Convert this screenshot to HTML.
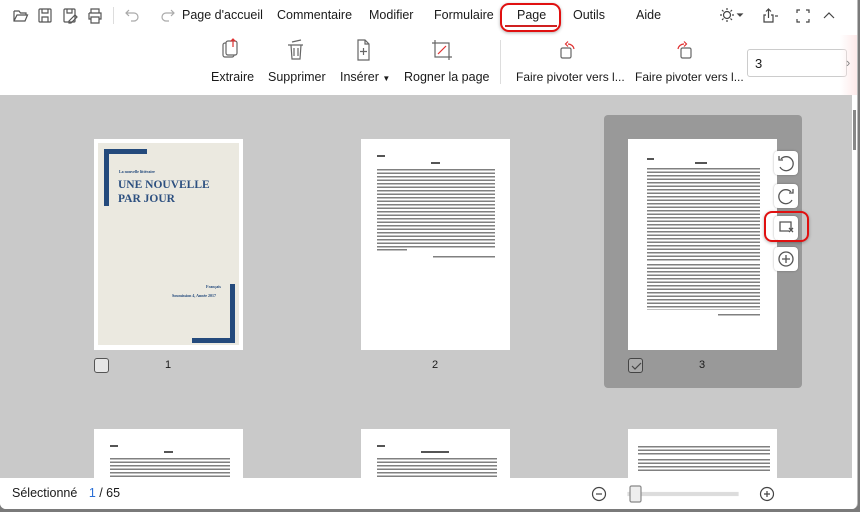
<!DOCTYPE html>
<html><head><meta charset="utf-8"><style>
*{margin:0;padding:0;box-sizing:border-box}
html,body{width:860px;height:512px;overflow:hidden}
body{background:#7a7a7a;font-family:"Liberation Sans",sans-serif;font-size:12.5px;color:#1a1a1a;position:relative}
.win{position:absolute;left:0;top:0;width:858px;height:509px;background:#fff;border-radius:0 0 6px 6px;overflow:hidden;border-right:1px solid #bbb}
.abs{position:absolute}
.menu span{position:absolute;top:8px;font-size:12.5px}
.tb{position:absolute;top:70px;font-size:12.5px;white-space:nowrap}
.gray{position:absolute;left:0;top:95px;width:852px;height:383px;background:#c9c9c9;overflow:hidden}
.pg{position:absolute;background:#fff;width:149px;height:211px;overflow:hidden}
.lines{position:absolute;background:repeating-linear-gradient(#555 0 1.3px,transparent 1.3px 3.5px);opacity:.75}
.cb{position:absolute;width:15px;height:15px;border:1px solid #555;border-radius:3px;background:#e6e6e6}
.num{position:absolute;font-size:11px}
.side{position:absolute;width:24px;height:24px;background:#fff;border-radius:4px;box-shadow:0 0 2px rgba(0,0,0,.3)}
.bottom{position:absolute;left:0;top:478px;width:858px;height:31px;background:#fff}
</style></head><body>
<div class="win">
<svg class="abs" style="left:12px;top:7px" width="95" height="18" fill="none" stroke="#555" stroke-width="1.2">
<path d="M2 4h5l1.5 2H14v2M2 4v10h11l2.5-6H5L2 14"/>
<rect x="27" y="2" width="12" height="13" rx="1"/><path d="M30 2v4h6V2M30 15v-5h6v5"/>
<rect x="52" y="2" width="11" height="13" rx="1"/><path d="M55 2v4h5V2M57 14l6-6 2 2-6 6h-2z"/>
<path d="M79 6V2h8v4M77 6h12v6h-2M79 12h-2V6M79 10h8v6h-8z"/>
</svg>
<div class="abs" style="left:113px;top:7px;width:1px;height:17px;background:#ddd"></div>
<svg class="abs" style="left:125px;top:6px" width="50" height="18" fill="none" stroke="#aaa" stroke-width="1.2">
<path d="M4 4L1 7l3 3M1 7h8a4 4 0 010 8H6"/><path d="M46 4l3 3-3 3M49 7h-8a4 4 0 000 8h3"/>
</svg>
<div class="menu">
<span style="left:182px">Page d'accueil</span>
<span style="left:277px">Commentaire</span>
<span style="left:369px">Modifier</span>
<span style="left:434px">Formulaire</span>
<span style="left:517px">Page</span>
<span style="left:573px">Outils</span>
<span style="left:636px">Aide</span>
</div>
<div class="abs" style="left:500px;top:3px;width:61px;height:29px;border:2.5px solid #e01010;border-radius:9px;box-shadow:0 1px 3px rgba(0,0,0,.3)"></div>
<div class="abs" style="left:505px;top:25px;width:52px;height:1.5px;background:#d02020"></div>
<svg class="abs" style="left:718px;top:5px" width="130" height="20" fill="none" stroke="#444" stroke-width="1.2">
<circle cx="9" cy="10" r="3.5"/><path d="M9 3v2M9 15v2M2 10h2M14 10h2M4 5l1.5 1.5M12.5 13.5L14 15M4 15l1.5-1.5M12.5 6.5L14 5"/>
<path d="M20 9h4l-2 2z" fill="#444"/>
<path d="M48 10h-2v7h9v-7h-2M50.5 13V4M48 6.5l2.5-2.5 2.5 2.5"/><path d="M57 11h3"/>
<path d="M79 8V5h3M88 5h3v3M79 14v3h3M88 17h3v-3"/>
<path d="M106 13l5-5 5 5"/>
</svg>
<svg class="abs" style="left:220px;top:38px" width="250" height="24" fill="none" stroke="#666" stroke-width="1.2">
<rect x="3" y="5" width="11" height="14" rx="2"/><rect x="6" y="3" width="11" height="14" rx="2" fill="#fff"/><path d="M13 1v8M10.5 3.5L13 1l2.5 2.5" stroke="#e03030"/>
<path d="M68 7h15M71 7l1 14h8l1-14M74 10v8M78 10v8M72 4l9-2"/>
<path d="M138 2h7l4 4v16h-11zM145 2v4h4M143.5 10v7M140 13.5h7"/>
<rect x="215" y="5" width="14" height="14"/><path d="M212 5h3M229 19v3M215 2v3M229 19h3"/><path d="M218 16l8-8" stroke="#e03030"/>
</svg>
<div class="tb" style="left:211px">Extraire</div>
<div class="tb" style="left:268px">Supprimer</div>
<div class="tb" style="left:340px">Insérer <span style="font-size:8px">▼</span></div>
<div class="tb" style="left:404px">Rogner la page</div>
<div class="abs" style="left:500px;top:40px;width:1px;height:44px;background:#ddd"></div>
<svg class="abs" style="left:555px;top:38px" width="150" height="26" fill="none" stroke="#666" stroke-width="1.2">
<rect x="6" y="10" width="10" height="10" rx="1.5"/><path d="M13 6a6 6 0 016 5" stroke="#e03030"/><path d="M13 3.5l-2.5 2.5 2.5 2.5" stroke="#e03030"/>
<rect x="126" y="10" width="10" height="10" rx="1.5"/><path d="M129 6a6 6 0 00-6 5" stroke="#e03030"/><path d="M129 3.5l2.5 2.5-2.5 2.5" stroke="#e03030"/>
</svg>
<div class="tb" style="left:516px;font-size:12px">Faire pivoter vers l...</div>
<div class="tb" style="left:635px;font-size:12px">Faire pivoter vers l...</div>
<div class="abs" style="left:747px;top:49px;width:100px;height:28px;border:1px solid #ccc;border-radius:3px;padding:6px 7px;font-size:13px;background:#fff">3</div>
<div class="abs" style="left:840px;top:35px;width:18px;height:60px;background:linear-gradient(90deg,rgba(255,255,255,0),#fde8e8)"></div>
<div class="abs" style="left:846px;top:55px;font-size:13px;color:#888">›</div>

<div class="gray">
 <div class="abs" style="left:604px;top:20px;width:198px;height:273px;background:#999;border-radius:4px"></div>
 <div class="pg" style="left:94px;top:44px">
  <div class="abs" style="left:4px;top:4px;width:141px;height:202px;background:#ebe9e0"></div>
  <div class="abs" style="left:10px;top:10px;width:43px;height:5px;background:#244a7c"></div>
  <div class="abs" style="left:10px;top:10px;width:5px;height:57px;background:#244a7c"></div>
  <div class="abs" style="left:98px;top:199px;width:43px;height:5px;background:#244a7c"></div>
  <div class="abs" style="left:136px;top:145px;width:5px;height:58px;background:#244a7c"></div>
  <div class="abs" style="left:25px;top:30px;font-family:'Liberation Serif',serif;font-size:4px;color:#244a7c;font-weight:bold">La nouvelle littéraire</div>
  <div class="abs" style="left:24px;top:39px;font-family:'Liberation Serif',serif;font-size:11.5px;line-height:14px;color:#2d5080;font-weight:bold">UNE NOUVELLE<br>PAR JOUR</div>
  <div class="abs" style="left:112px;top:145px;font-family:'Liberation Serif',serif;font-size:4px;color:#244a7c;font-weight:bold">Français</div>
  <div class="abs" style="left:78px;top:154px;font-family:'Liberation Serif',serif;font-size:4px;color:#244a7c;font-weight:bold">Soumission 4, Année 2017</div>
 </div>
 <div class="cb" style="left:94px;top:263px"></div><div class="num" style="left:165px;top:264px">1</div>
 <div class="pg" style="left:361px;top:44px">
  <div class="abs" style="left:16px;top:16px;width:8px;height:2px;background:#555"></div>
  <div class="abs" style="left:70px;top:23px;width:9px;height:2px;background:#555"></div>
  <div class="lines" style="left:16px;top:30px;width:118px;height:80px"></div>
  <div class="lines" style="left:16px;top:110px;width:30px;height:3px"></div>
  <div class="lines" style="left:72px;top:117px;width:62px;height:3px"></div>
 </div>
 <div class="num" style="left:432px;top:264px">2</div>
 <div class="pg" style="left:628px;top:44px">
  <div class="abs" style="left:19px;top:19px;width:7px;height:2px;background:#555"></div>
  <div class="abs" style="left:67px;top:23px;width:12px;height:2px;background:#555"></div>
  <div class="lines" style="left:19px;top:29px;width:113px;height:94px"></div>
  <div class="lines" style="left:19px;top:125px;width:113px;height:46px"></div>
  <div class="lines" style="left:90px;top:175px;width:42px;height:3px"></div>
 </div>
 <div class="cb" style="left:628px;top:263px;background:#aaa;border-color:#444"></div>
 <svg class="abs" style="left:630px;top:265px" width="12" height="12"><path d="M2 6l3 3 6-6" stroke="#444" stroke-width="1.2" fill="none"/></svg>
 <div class="num" style="left:699px;top:264px">3</div>
 <div class="side" style="left:774px;top:56px"></div>
 <div class="side" style="left:774px;top:89px"></div>
 <div class="side" style="left:774px;top:121px"></div>
 <div class="side" style="left:774px;top:152px"></div>
 <svg class="abs" style="left:774px;top:56px" width="24" height="124" fill="none" stroke="#555" stroke-width="1.3">
  <path d="M7 8a7 7 0 11-1 8"/><path d="M5 5v4h4"/>
  <path d="M17 41a7 7 0 10 1 8"/><path d="M19 38v4h-4"/>
  <path d="M15 80H6V71h11v7"/><path d="M15 77l4 4M19 77l-4 4"/>
  <circle cx="12" cy="108" r="7"/><path d="M12 104v8M8 108h8"/>
 </svg>
 <div class="abs" style="left:764px;top:116px;width:45px;height:31px;border:2.5px solid #e01010;border-radius:8px;box-shadow:0 1px 3px rgba(0,0,0,.3)"></div>
 <div class="pg" style="left:94px;top:334px;height:49px">
  <div class="abs" style="left:16px;top:16px;width:8px;height:2px;background:#555"></div>
  <div class="abs" style="left:70px;top:22px;width:9px;height:2px;background:#555"></div>
  <div class="lines" style="left:16px;top:29px;width:120px;height:20px"></div>
 </div>
 <div class="pg" style="left:361px;top:334px;height:49px">
  <div class="abs" style="left:16px;top:16px;width:8px;height:2px;background:#555"></div>
  <div class="abs" style="left:60px;top:22px;width:28px;height:2px;background:#555"></div>
  <div class="lines" style="left:16px;top:29px;width:120px;height:20px"></div>
 </div>
 <div class="pg" style="left:628px;top:334px;height:49px">
  <div class="lines" style="left:10px;top:17px;width:132px;height:10px"></div>
  <div class="lines" style="left:10px;top:30px;width:132px;height:12px"></div>
 </div>
</div>
<div class="abs" style="left:852px;top:95px;width:6px;height:383px;background:#fff"></div>
<div class="abs" style="left:853px;top:110px;width:3px;height:40px;background:#888"></div>
<div class="bottom">
 <div class="abs" style="left:12px;top:8px;font-size:12.5px">Sélectionné <span style="color:#2a6fd6;margin-left:8px">1</span> / 65</div>
 <svg class="abs" style="left:590px;top:7px" width="190" height="18" fill="none" stroke="#444" stroke-width="1.2">
  <circle cx="9" cy="9" r="6.5"/><path d="M6 9h6"/>
  <rect x="38" y="7.5" width="110" height="3" fill="#ddd" stroke="#ddd"/>
  <rect x="40" y="1" width="11" height="16" rx="1.5" fill="#eee" stroke="#888"/>
  <circle cx="177" cy="9" r="6.5"/><path d="M174 9h6M177 6v6"/>
 </svg>
</div>
</div>
</body></html>
